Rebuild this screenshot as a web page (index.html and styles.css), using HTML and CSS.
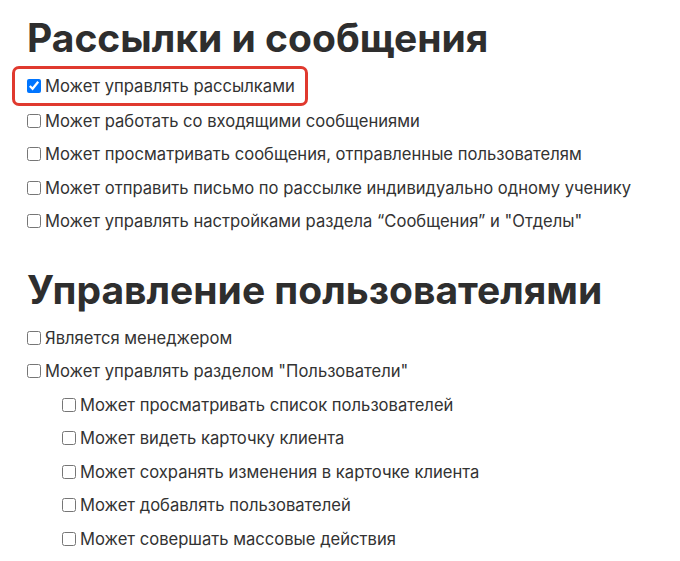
FILE: index.html
```html
<!DOCTYPE html>
<html lang="ru">
<head>
    <meta charset="UTF-8">
    <meta name="viewport" content="width=device-width, initial-scale=1.0">
    <title>Права доступа</title>
    <link rel="stylesheet" href="styles.css">
</head>
<body>
    <div class="rights">
        <h2>Рассылки и сообщения</h2>
        <label class="right marked"><input type="checkbox" checked> Может управлять рассылками</label>
        <label class="right"><input type="checkbox"> Может работать со входящими сообщениями</label>
        <label class="right"><input type="checkbox"> Может просматривать сообщения, отправленные пользователям</label>
        <label class="right"><input type="checkbox"> Может отправить письмо по рассылке индивидуально одному ученику</label>
        <label class="right"><input type="checkbox"> Может управлять настройками раздела “Сообщения” и "Отделы"</label>

        <h2 class="next">Управление пользователями</h2>
        <label class="right"><input type="checkbox"> Является менеджером</label>
        <label class="right"><input type="checkbox"> Может управлять разделом "Пользователи"</label>
        <div class="sub">
            <label class="right"><input type="checkbox"> Может просматривать список пользователей</label>
            <label class="right"><input type="checkbox"> Может видеть карточку клиента</label>
            <label class="right"><input type="checkbox"> Может сохранять изменения в карточке клиента</label>
            <label class="right"><input type="checkbox"> Может добавлять пользователей</label>
            <label class="right"><input type="checkbox"> Может совершать массовые действия</label>
        </div>
    </div>
</body>
</html>
```

FILE: styles.css
```css
/* Permission settings list */
body {
    margin: 0;
    font-family: Inter, "Noto Sans", sans-serif;
    color: #333;
    background: #fff;
}
.rights {
    padding: 12px 0 0 27px;
}
h2 {
    margin: 0 0 5px 0;
    font-size: 39px;
    font-weight: 700;
    line-height: 52px;
    color: #2e2e2e;
}
h2.next {
    margin-top: 26px;
}
.right {
    display: flex;
    align-items: center;
    width: max-content;
    height: 33.5px;
    font-size: 16.6px;
    color: #333;
}
.right input {
    width: 14px;
    height: 14px;
    margin: 0 4px 0 0;
}
.marked {
    margin-left: -15px;
    padding: 0 10px 0 12px;
    height: 34px;
    border: 3px solid #e0392e;
    border-radius: 7px;
    margin-top: -3px;
    margin-bottom: -2px;
}
.sub {
    padding-left: 35px;
}
```
